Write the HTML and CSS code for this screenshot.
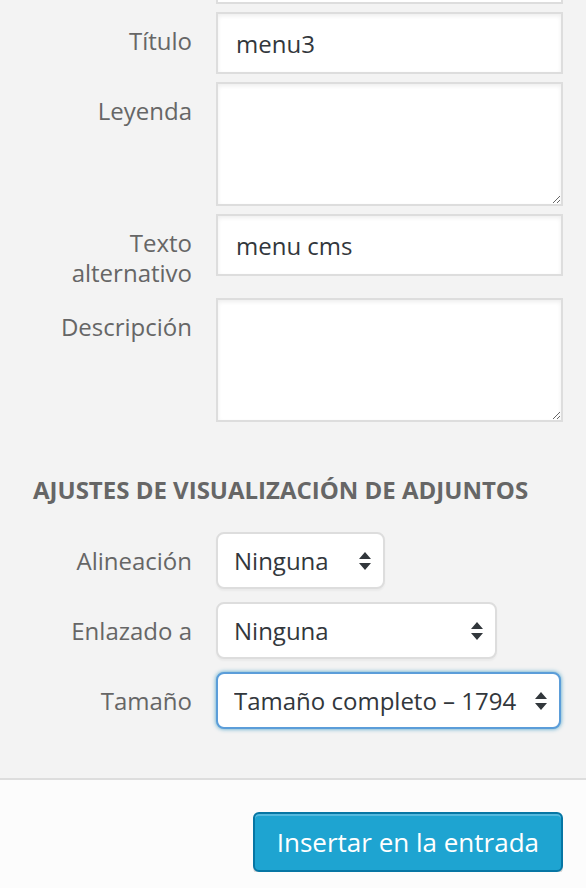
FILE: index.html
```html
<!DOCTYPE html>
<html lang="es">
<head>
    <meta charset="UTF-8">
    <title>Detalles del adjunto</title>
    <link rel="stylesheet" href="styles.css">
</head>
<body>
    <div class="sidebar">
        <div class="prev-field"></div>

        <label class="setting">
            <span class="name">Título</span>
            <input type="text" value="menu3">
        </label>
        <label class="setting">
            <span class="name">Leyenda</span>
            <textarea></textarea>
        </label>
        <label class="setting">
            <span class="name">Texto alternativo</span>
            <input type="text" value="menu cms">
        </label>
        <label class="setting">
            <span class="name">Descripción</span>
            <textarea></textarea>
        </label>

        <h2>Ajustes de visualización de adjuntos</h2>

        <label class="setting select-row">
            <span class="name">Alineación</span>
            <span class="select-wrap w-small">
                <select><option>Ninguna</option></select>
                <svg class="arrows" width="12" height="18" viewBox="0 0 12 18"><path d="M6 0 L12 7 H0 Z M0 11 H12 L6 18 Z" fill="#32373c"/></svg>
            </span>
        </label>
        <label class="setting select-row">
            <span class="name">Enlazado a</span>
            <span class="select-wrap w-mid">
                <select><option>Ninguna</option></select>
                <svg class="arrows" width="12" height="18" viewBox="0 0 12 18"><path d="M6 0 L12 7 H0 Z M0 11 H12 L6 18 Z" fill="#32373c"/></svg>
            </span>
        </label>
        <label class="setting select-row">
            <span class="name">Tamaño</span>
            <span class="select-wrap w-full">
                <select class="focused"><option>Tamaño completo – 1794 × 1040</option></select>
                <svg class="arrows" width="12" height="18" viewBox="0 0 12 18"><path d="M6 0 L12 7 H0 Z M0 11 H12 L6 18 Z" fill="#32373c"/></svg>
            </span>
        </label>
    </div>

    <div class="toolbar">
        <button class="button-primary">Insertar en la entrada</button>
    </div>
</body>
</html>
```
FILE: styles.css
```css
body {
    margin: 0;
    font-family: "Open Sans", "Liberation Sans", sans-serif;
    background: #fcfcfc;
    color: #666;
}

.sidebar {
    background: #f3f3f3;
    padding: 0 23px 49px 0;
    border-bottom: 2px solid #dddddd;
}

.prev-field {
    margin-left: 216px;
    height: 2px;
    background: #fff;
    border: 2px solid #dddddd;
    border-top: none;
}

.setting {
    display: grid;
    grid-template-columns: 192px 347px;
    column-gap: 24px;
    align-items: start;
    margin-top: 8px;
}

.setting .name {
    text-align: right;
    font-size: 24px;
    line-height: 30px;
    padding: 14px 0 2px 40px;
}

input[type="text"],
textarea,
select {
    box-sizing: border-box;
    width: 100%;
    margin: 0;
    font-family: inherit;
    font-size: 24px;
    color: #32373c;
    background: #fff;
    border: 2px solid #dddddd;
    box-shadow: inset 0 2px 4px rgba(0,0,0,0.07);
    outline: none;
}

input[type="text"] {
    height: 62px;
    padding: 0 18px;
}

textarea {
    height: 124px;
    display: block;
    resize: vertical;
}

h2 {
    margin: 50px 0 0 33px;
    font-size: 24px;
    font-weight: 700;
    text-transform: uppercase;
    color: #666;
    line-height: 36px;
}

.select-row {
    align-items: center;
    margin-top: 13px;
}

h2 + .select-row {
    margin-top: 24px;
}

.select-row .name {
    padding-top: 0;
    padding-bottom: 0;
}

.select-wrap {
    position: relative;
    display: block;
}

.w-small { width: 169px; }
.w-mid { width: 281px; }
.w-full { width: 345px; }

select {
    -webkit-appearance: none;
    appearance: none;
    height: 57px;
    padding: 0 40px 0 16px;
    border-radius: 8px;
    box-shadow: 0 2px 2px rgba(0,0,0,0.04);
    white-space: nowrap;
    overflow: hidden;
    text-overflow: clip;
}

select.focused {
    border-color: #5b9dd9;
    box-shadow: 0 0 4px rgba(30,140,190,0.8);
}

/* up/down arrows drawn over the select */
.arrows {
    position: absolute;
    right: 14px;
    top: 50%;
    margin-top: -9px;
    pointer-events: none;
}

.toolbar {
    display: flex;
    justify-content: flex-end;
    padding: 32px 23px 0 0;
}

.button-primary {
    font-family: inherit;
    font-size: 26px;
    color: #fff;
    background: #1ea4d1;
    border: 2px solid #0676a4;
    border-radius: 6px;
    box-shadow: inset 0 2px 0 rgba(120,200,230,0.6), 0 2px 0 rgba(0,0,0,0.15);
    height: 60px;
    padding: 0 22px;
    cursor: pointer;
}
```
